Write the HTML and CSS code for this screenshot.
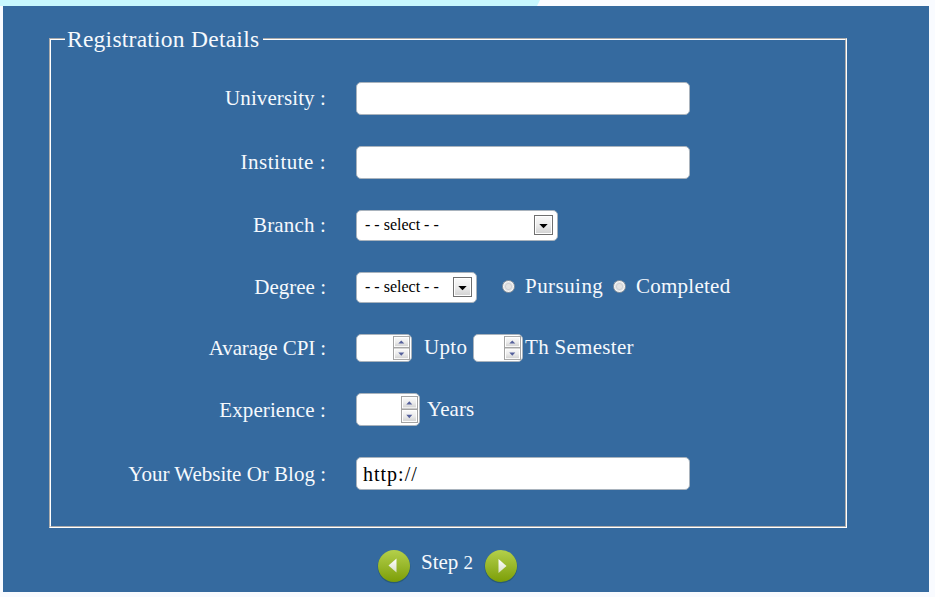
FILE: index.html
```html
<!DOCTYPE html>
<html lang="en">
<head>
<meta charset="utf-8">
<title>Registration</title>
<link rel="stylesheet" href="styles.css">
</head>
<body>
<div class="band"></div>
<main class="panel">
  <fieldset class="details">
    <legend>Registration Details</legend>
    <div class="row"><label class="label t-university">University :</label><input class="field" type="text"></div>
    <div class="row"><label class="label t-institute">Institute :</label><input class="field" type="text"></div>
    <div class="row"><label class="label t-branch">Branch :</label>
      <div class="select wide"><span>- - select - -</span><svg class="drop" viewBox="0 0 19 20"><use href="#drop"/></svg></div>
    </div>
    <div class="row"><label class="label t-degree">Degree :</label>
      <div class="group">
        <div class="select"><span>- - select - -</span><svg class="drop" viewBox="0 0 19 20"><use href="#drop"/></svg></div>
        <i class="radio first"></i><span class="text pursuing">Pursuing</span>
        <i class="radio"></i><span class="text completed">Completed</span>
      </div>
    </div>
    <div class="row"><label class="label t-cpi">Avarage CPI :</label>
      <div class="group">
        <div class="number cpi"><svg class="spin" viewBox="0 0 17 26" preserveAspectRatio="none"><use href="#spin"/></svg></div>
        <span class="text upto">Upto</span>
        <div class="number semester"><svg class="spin" viewBox="0 0 17 26" preserveAspectRatio="none"><use href="#spin"/></svg></div>
        <span class="text th">Th Semester</span>
      </div>
    </div>
    <div class="row"><label class="label t-experience">Experience :</label>
      <div class="group">
        <div class="number years"><svg class="spin" viewBox="0 0 17 26" preserveAspectRatio="none"><use href="#spin"/></svg></div>
        <span class="text yr">Years</span>
      </div>
    </div>
    <div class="row"><label class="label t-website">Your Website Or Blog :</label><input class="field" type="text" value="http://"></div>
  </fieldset>
  <nav class="steps">
    <svg class="nav" viewBox="0 0 36 36"><circle cx="18" cy="18.8" r="16.4" fill="#1f4f58" opacity=".55"/><circle cx="18" cy="18" r="16" fill="url(#green)"/><path d="M12.5 17.5 20.5 10.5v14z" fill="url(#arrow)"/></svg>
    <span class="step">Step <span class="num">2</span></span>
    <svg class="nav" viewBox="0 0 36 36"><circle cx="18" cy="18.8" r="16.4" fill="#1f4f58" opacity=".55"/><circle cx="18" cy="18" r="16" fill="url(#green)"/><path d="M23.5 18 15.5 11v14z" fill="url(#arrow)"/></svg>
  </nav>
</main>
<svg class="defs" width="0" height="0">
  <defs>
    <linearGradient id="face" x2="0" y2="1"><stop stop-color="#f8f8f8"/><stop offset=".5" stop-color="#ececec"/><stop offset="1" stop-color="#d4d4d4"/></linearGradient>
    <linearGradient id="green" x2="0" y2="1"><stop stop-color="#b4d04a"/><stop offset=".5" stop-color="#98b72b"/><stop offset="1" stop-color="#7c9e07"/></linearGradient>
    <linearGradient id="arrow" x2="0" y2="1"><stop stop-color="#fff"/><stop offset="1" stop-color="#d9dfc6"/></linearGradient>
    <symbol id="drop" viewBox="0 0 19 20"><rect x=".5" y=".5" width="18" height="19" fill="#fff" stroke="#6f6f6f"/><rect x="2" y="2" width="15" height="16" fill="url(#face)"/><path d="M5.3 9h8.4l-4.2 4.2z" fill="#000"/></symbol>
    <symbol id="spin" viewBox="0 0 17 26" preserveAspectRatio="none"><rect x=".5" y=".5" width="16" height="12" fill="#fff" stroke="#a3a3a3"/><rect x="2" y="2" width="13" height="9" fill="url(#face)"/><rect x=".5" y="13" width="16" height="12.5" fill="#fff" stroke="#a3a3a3"/><rect x="2" y="14.5" width="13" height="9.5" fill="url(#face)"/><path d="M5.3 8.2h6L8.3 5zM5.3 18h6l-3 3.4z" fill="#55609b"/></symbol>
  </defs>
</svg>
</body>
</html>
```
FILE: styles.css
```css
* { box-sizing: border-box; }
body {
  margin: 0;
  height: 597px;
  overflow: hidden;
  background: #f9fbff;
  color: #f5f9fd;
  font: 21px/26px "Liberation Serif", serif;
  white-space: nowrap;
}
.band {
  width: 540px;
  height: 6px;
  background: #c7f7fe;
  clip-path: polygon(0 0, 100% 0, 537px 100%, 0 100%);
}
.panel {
  width: 926px;
  height: 586px;
  margin-left: 3px;
  padding: 20px 0 0 46px;
  background: #356a9f;
}
.details {
  width: 798px;
  height: 502px;
  margin: 0;
  padding: 14px 0 0;
  border: 2px groove #fff;
}
legend {
  height: 26px;
  margin-left: 14px;
  padding: 0 2px;
  width: 198px;
  font-size: 23.5px;
  letter-spacing: .25px;
}
.row {
  display: grid;
  grid-template-columns: 275px 1fr;
  column-gap: 30px;
  align-items: center;
  height: 62px;
}
.row:nth-of-type(1), .row:nth-of-type(2) { height: 64px; }
.row:nth-of-type(5) { height: 60px; }
.row:nth-of-type(6) { height: 63px; }
.row:nth-of-type(7) { height: 65px; }
.label { text-align: right; }
.t-university, .t-experience { letter-spacing: .1px; }
.t-institute { letter-spacing: .5px; }
.t-branch { letter-spacing: .15px; }
.t-cpi { letter-spacing: -.1px; }
.group, .steps { display: flex; align-items: center; }
.field, .select, .number {
  border: 1px solid #a9b3bd;
  border-radius: 5px;
  background: #fff;
  color: #000;
}
.field {
  width: 334px;
  height: 33px;
  padding: 1px 6px 0;
  font: 20px "Liberation Serif", serif;
  letter-spacing: 1px;
}
.select {
  display: flex;
  align-items: center;
  justify-content: space-between;
  width: 121px;
  height: 31px;
  padding: 0 4px 0 8px;
  font-size: 16px;
}
.wide { width: 202px; }
.drop { width: 19px; height: 20px; }
.number { display: flex; justify-content: flex-end; padding: 1px; }
.cpi { width: 56px; height: 28px; }
.semester { width: 50px; height: 28px; }
.years { width: 64px; height: 33px; padding: 2px 1px; }
.spin { width: 17px; height: 100%; }
.radio {
  width: 13px;
  height: 13px;
  margin: 0 10px 2px 0;
  border: 1px solid #8e969e;
  border-radius: 50%;
  background: radial-gradient(circle, #e3e3e3 0 2px, #d0d1d4 3px, #f6f6f6 5px);
}
.radio.first { margin-left: 25px; }
.text { padding-bottom: 2px; }
.pursuing { width: 88px; letter-spacing: .45px; }
.completed { letter-spacing: .25px; }
.upto { width: 61px; padding-left: 12px; letter-spacing: .35px; }
.th { padding-left: 2px; letter-spacing: .3px; }
.yr { padding-left: 7px; letter-spacing: .1px; }
.steps { height: 36px; margin: 20px 0 0 327px; }
.nav { width: 36px; height: 36px; }
.step { width: 71px; padding: 0 0 7px 9px; }
.num { font-size: 19px; }
.defs { position: absolute; }
```
